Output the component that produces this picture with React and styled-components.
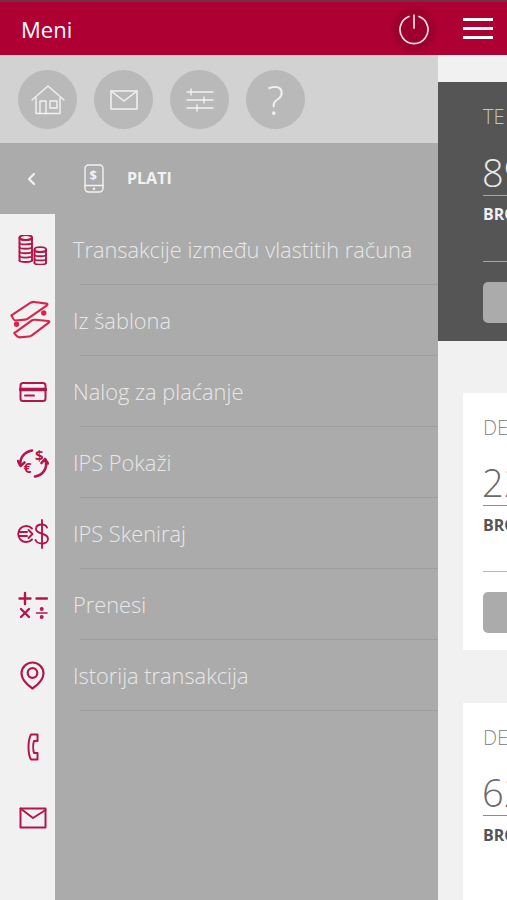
import React from 'react'
import styled, { createGlobalStyle } from 'styled-components'

const GlobalStyle = createGlobalStyle`
  html, body {
    margin: 0;
    padding: 0;
    background: #f1f1f1;
    font-family: "Open Sans", "Liberation Sans", sans-serif;
  }
`

const Page = styled.div`
  width: 507px;
  height: 900px;
  display: flex;
  flex-direction: column;
  overflow: hidden;
`

const Header = styled.header`
  height: 53px;
  flex: none;
  border-top: 2px solid #6f3143;
  background: #ae0032;
  display: flex;
  align-items: center;
  color: #fff;
`

const Title = styled.h1`
  flex: 1;
  margin: 0 0 0 21px;
  font-size: 22px;
  font-weight: 500;
`

const PowerButton = styled.div`
  width: 48px;
  height: 48px;
  margin-right: 25px;
  border-radius: 50%;
  background: radial-gradient(circle, #9e002d 58%, #ae0032 72%);
  display: flex;
  align-items: center;
  justify-content: center;
  color: #f6dfe5;
`

const Burger = styled.div`
  width: 30px;
  margin-right: 14px;
  display: flex;
  flex-direction: column;
  gap: 6.5px;

  span {
    height: 2.5px;
    background: #fff;
  }
`

const Body = styled.div`
  flex: 1;
  display: flex;
  min-height: 0;
`

const Drawer = styled.nav`
  width: 438px;
  flex: none;
  display: flex;
  flex-direction: column;
`

const QuickRow = styled.div`
  height: 88px;
  flex: none;
  box-sizing: border-box;
  padding: 15px 0 0 18px;
  background: #d2d2d2;
  display: flex;
  gap: 17px;
`

const QuickButton = styled.div`
  width: 59px;
  height: 59px;
  border-radius: 50%;
  background: #b9b9b9;
  display: flex;
  align-items: center;
  justify-content: center;
  color: #f2f2f2;
  font-size: 40px;
  font-weight: 300;
`

const SubHeader = styled.div`
  height: 71px;
  flex: none;
  background: #ababab;
  display: flex;
  align-items: center;
  color: #f2f2f2;
`

const BackSlot = styled.div`
  width: 84px;
  padding-left: 26px;
  box-sizing: border-box;
  display: flex;
`

const SubTitle = styled.span`
  margin: 0 0 2px 23px;
  font-size: 16px;
  font-weight: 700;
`

const Columns = styled.div`
  flex: 1;
  display: flex;
  min-height: 0;
`

const Rail = styled.div`
  width: 55px;
  flex: none;
  box-sizing: border-box;
  padding-left: 10px;
  background: #f1f1f1;
`

const RailIcon = styled.div`
  height: 71px;
  display: flex;
  align-items: center;
  justify-content: center;
  color: ${p => p.$bright ? '#d8254f' : '#b3174a'};
`

const List = styled.ul`
  flex: 1;
  margin: 0;
  padding: 0;
  list-style: none;
  background: #ababab;
`

const Item = styled.li`
  height: 71px;
  box-sizing: border-box;
  margin-left: 25px;
  border-bottom: 1px solid #9d9d9d;
  display: flex;
  align-items: center;
  color: #e8e8e8;
  font-size: 21.8px;
  font-weight: 300;
  white-space: nowrap;

  span {
    margin-left: -7px;
  }
`

const Content = styled.main`
  flex: 1;
  min-width: 0;
  overflow: hidden;
  display: flex;
  flex-direction: column;
  padding-top: 27px;
`

const Card = styled.section`
  flex: none;
  box-sizing: border-box;
  height: ${p => p.$height}px;
  margin-left: ${p => p.$dark ? 0 : 25}px;
  margin-bottom: ${p => p.$gap}px;
  padding: 21px 0 0 ${p => p.$dark ? 45 : 20}px;
  background: ${p => p.$dark ? '#555555' : '#ffffff'};
  color: ${p => p.$dark ? '#f0f0f0' : '#555555'};
`

const CardLabel = styled.div`
  height: 28px;
  line-height: 28px;
  font-size: 20px;
  font-weight: 300;
  color: ${p => p.$dark ? '#c4c4c4' : '#8c8c8c'};
`

const Amount = styled.div`
  margin-top: ${p => p.$dark ? 14 : 13}px;
  height: 50px;
  line-height: 54px;
  width: 300px;
  border-bottom: 1px solid ${p => p.$dark ? '#a8a8a8' : '#8c8c8c'};
  color: ${p => p.$dark ? '#e8e8e8' : '#6a6a6a'};
  font-size: 38px;
  font-weight: 300;
  text-indent: -1px;
  white-space: nowrap;
`

const AccountLabel = styled.div`
  margin-top: ${p => p.$dark ? 8 : 9}px;
  height: 21px;
  line-height: 21px;
  font-size: 16px;
  font-weight: 700;
`

const Divider = styled.div`
  margin-top: ${p => p.$dark ? 36 : 35}px;
  width: 300px;
  border-top: 1px solid ${p => p.$dark ? '#a8a8a8' : '#b5b5b5'};
`

const ActionButton = styled.div`
  margin-top: 20px;
  width: 300px;
  height: 41px;
  border-radius: 5px;
  background: #ababab;
`

const Svg = ({ size = 30, h, sw = 2, children }) => (
  <svg
    width={size}
    height={h || size}
    viewBox={`0 0 ${size} ${h || size}`}
    fill="none"
    stroke="currentColor"
    strokeWidth={sw}
    strokeLinecap="round"
    strokeLinejoin="round"
  >
    {children}
  </svg>
)

const Glyph = styled.text`
  font-family: "Open Sans", sans-serif;
  font-weight: 700;
  fill: currentColor;
  stroke: none;
`

const CoinStack = ({ x, top, w, count, step }) => (
  <g>
    {Array.from({ length: count }).map((_, i) => (
      <path key={i} d={`M${x} ${top + 3 + i * step}c0 2 ${w} 2 ${w} 0`} />
    ))}
    <ellipse cx={x + w / 2} cy={top + 2} rx={w / 2} ry="2.4" />
    <path d={`M${x} ${top + 2}V${top + 3 + (count - 1) * step}M${x + w} ${top + 2}V${top + 3 + (count - 1) * step}`} />
  </g>
)

const icons = [
  <Svg size={30} sw={1.9}>
    <CoinStack x={1.5} top={0.5} w={12.5} count={6} step={4.4} />
    <CoinStack x={16.5} top={12.5} w={11.5} count={4} step={4.2} />
  </Svg>,
  <Svg size={48} h={44} sw={2.3}>
    <path d="M1.5 16L22 2.5Q24 1.5 26 1.7L39 3.5Q41 4 39 5.5L19 19.5Q18 20.3 16 20.5L6 21.5Q4 21.5 1.5 16Z" />
    <path d="M4.5 35L23 21.5Q25 20.5 27 20.7L41 22Q43 22.5 41 24L23 37.5Q22 38.3 20 38.5L10 39.5Q8 39.5 4.5 35Z" />
    <circle cx="36" cy="13.5" r="1.7" fill="currentColor" />
    <circle cx="7" cy="25.5" r="1.7" fill="currentColor" />
  </Svg>,
  <Svg size={28} h={22} sw={2}>
    <rect x="1.5" y="2" width="25" height="18" rx="2.5" />
    <path d="M1.5 8.5H26.5" strokeWidth="3.5" />
    <path d="M6 14.5H15" />
  </Svg>,
  <Svg size={32} sw={2.6}>
    <path d="M3.5 18C2.5 11 7 5 15 3.5" />
    <path d="M1 14L3.5 19L7.5 15.5" />
    <path d="M28.5 13C31 21 26 28 18 29.5" />
    <path d="M24.5 16L28 12L31 16.5" />
    <Glyph x="18" y="14" fontSize="15">$</Glyph>
    <Glyph x="6.5" y="26" fontSize="14">€</Glyph>
  </Svg>,
  <Svg size={32} h={34} sw={1.9}>
    <path d="M15 11.5A8 8 0 1 0 15 22.5" />
    <path d="M2 15H10M2 19H10" />
    <path d="M11.5 13L15.5 17L11.5 21" />
    <path d="M30 10.5C29 8 27 7.5 25 7.5C21.5 7.5 19 9 19 12C19 18 31 15 31 22C31 25 28 26.5 25 26.5C22 26.5 19.5 25.5 18.5 23" />
    <path d="M25 3V31" />
  </Svg>,
  <Svg size={30} h={28} sw={2.4}>
    <path d="M1.5 7.5H12.5M7 2V13" />
    <path d="M18.5 7.5H29" />
    <path d="M3 18L11 26M11 18L3 26" />
    <path d="M18.5 22H29" strokeWidth="1.6" />
    <circle cx="23.7" cy="18" r="0.8" fill="currentColor" />
    <circle cx="23.7" cy="26" r="0.8" fill="currentColor" />
  </Svg>,
  <Svg size={25} h={29} sw={2.2}>
    <path d="M12.5 27.5C6 23 1.5 18 1.5 12.5A11 11 0 0 1 23.5 12.5C23.5 18 19 23 12.5 27.5Z" />
    <circle cx="12.5" cy="12" r="4.8" />
  </Svg>,
  <Svg size={12} h={28} sw={2}>
    <path d="M4 1.5H10.5V8H7C6 11 6 17 7 20H10.5V26.5H4C2.5 24 1.5 19 1.5 14C1.5 9 2.5 4 4 1.5Z" />
  </Svg>,
  <Svg size={28} h={22} sw={2}>
    <path d="M1.5 1.5H26.5V20.5H1.5Z" />
    <path d="M1.5 1.5L14 11L26.5 3" />
  </Svg>,
]

const items = [
  'Transakcije između vlastitih računa',
  'Iz šablona',
  'Nalog za plaćanje',
  'IPS Pokaži',
  'IPS Skeniraj',
  'Prenesi',
  'Istorija transakcija',
]

const cards = [
  { label: 'TE', amount: '89', dark: true, height: 259, gap: 52, button: true },
  { label: 'DE', amount: '22', height: 257, gap: 53, button: true },
  { label: 'DE', amount: '62', height: 257, gap: 0 },
]

export default function App() {
  return (
    <Page>
      <GlobalStyle />
      <Header>
        <Title>Meni</Title>
        <PowerButton>
          <Svg size={32} sw={1.7}>
            <path d="M16 2V15" />
            <path d="M11 3.5A14 14 0 1 0 21 3.5" />
          </Svg>
        </PowerButton>
        <Burger><span /><span /><span /></Burger>
      </Header>
      <Body>
        <Drawer>
          <QuickRow>
            <QuickButton>
              <Svg size={34} h={30} sw={1.4}>
                <path d="M1 15L17 1L33 15" />
                <path d="M5 13V28.5H29V13" />
                <path d="M9 28.5V16H15V28.5" />
                <rect x="19" y="16" width="7" height="7" />
              </Svg>
            </QuickButton>
            <QuickButton>
              <Svg size={28} h={22} sw={1.5}>
                <path d="M1 2H27V20H1Z" />
                <path d="M1 2L14 12L27 2" />
              </Svg>
            </QuickButton>
            <QuickButton>
              <Svg size={28} h={24} sw={1.4}>
                <path d="M1 4H27M1 12H27M1 20H27" />
                <path d="M5 1V7M18 9V15M11 17V23" />
              </Svg>
            </QuickButton>
            <QuickButton>?</QuickButton>
          </QuickRow>
          <SubHeader>
            <BackSlot>
              <Svg size={10} h={14} sw={2.2}>
                <path d="M8 2L3 7L8 12" />
              </Svg>
            </BackSlot>
            <Svg size={20} h={29} sw={1.4}>
              <rect x="1" y="1" width="18" height="27" rx="3.5" />
              <path d="M1 21.5H19" />
              <circle cx="10" cy="24.7" r="0.6" fill="currentColor" />
              <Glyph x="5.5" y="16" fontSize="13">$</Glyph>
            </Svg>
            <SubTitle>PLATI</SubTitle>
          </SubHeader>
          <Columns>
            <Rail>
              {icons.map((icon, i) => (
                <RailIcon key={i} $bright={i === 1}>{icon}</RailIcon>
              ))}
            </Rail>
            <List>
              {items.map(item => (
                <Item key={item}><span>{item}</span></Item>
              ))}
            </List>
          </Columns>
        </Drawer>
        <Content>
          {cards.map((card, i) => (
            <Card key={i} $dark={card.dark} $height={card.height} $gap={card.gap}>
              <CardLabel $dark={card.dark}>{card.label}</CardLabel>
              <Amount $dark={card.dark}>{card.amount}</Amount>
              <AccountLabel $dark={card.dark}>BRO</AccountLabel>
              {card.button && <Divider $dark={card.dark} />}
              {card.button && <ActionButton />}
            </Card>
          ))}
        </Content>
      </Body>
    </Page>
  )
}
